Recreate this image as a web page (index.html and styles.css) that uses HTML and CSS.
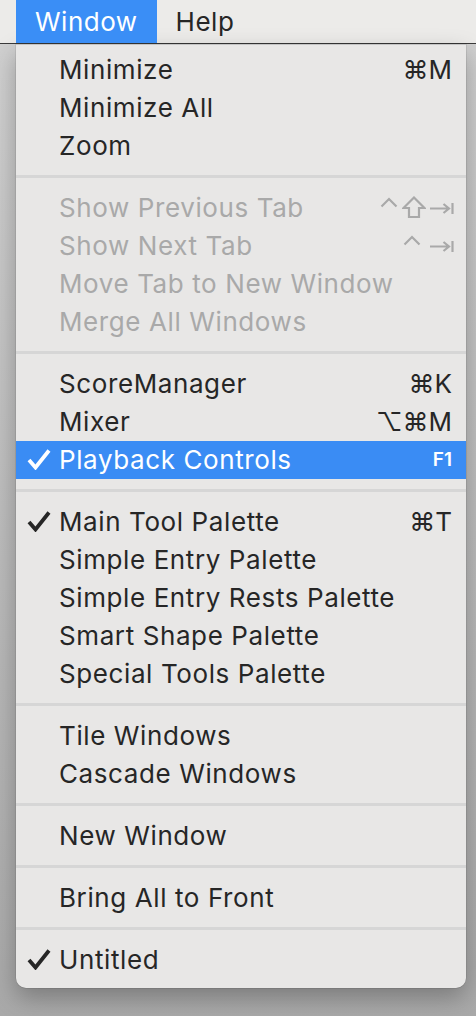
FILE: index.html
```html
<!DOCTYPE html>
<html>
<head>
<meta charset="utf-8">
<link rel="stylesheet" href="styles.css">
</head>
<body>
<div class="menubar">
  <span class="mb-item active">Window</span>
  <span class="mb-item">Help</span>
</div>
<div class="stage">
  <div class="menu">
    <div class="item"><span class="chk"></span><span class="lbl">Minimize</span><span class="key">⌘M</span></div>
    <div class="item"><span class="chk"></span><span class="lbl">Minimize All</span><span class="key"></span></div>
    <div class="item"><span class="chk"></span><span class="lbl">Zoom</span><span class="key"></span></div>
    <div class="sep"></div>
    <div class="item disabled"><span class="chk"></span><span class="lbl">Show Previous Tab</span><span class="key sym"><svg class="ic" width="18" height="24" viewBox="0 0 18 24"><path d="M1.5 10.5 L9 3 L16.5 10.5"/></svg><svg class="ic shift" width="24" height="24" viewBox="0 0 24 24"><path d="M12 1.5 L22.5 12 L17 12 L17 21 L7 21 L7 12 L1.5 12 Z"/></svg><svg class="ic" width="24" height="24" viewBox="0 0 24 24"><path d="M0 12.5 H19 M13.5 8 L19 12.5 L13.5 17 M22.5 7 V18"/></svg></span></div>
    <div class="item disabled"><span class="chk"></span><span class="lbl">Show Next Tab</span><span class="key sym next"><svg class="ic" width="18" height="24" viewBox="0 0 18 24"><path d="M1.5 10.5 L9 3 L16.5 10.5"/></svg><svg class="ic" width="24" height="24" viewBox="0 0 24 24"><path d="M0 12.5 H19 M13.5 8 L19 12.5 L13.5 17 M22.5 7 V18"/></svg></span></div>
    <div class="item disabled"><span class="chk"></span><span class="lbl">Move Tab to New Window</span><span class="key"></span></div>
    <div class="item disabled"><span class="chk"></span><span class="lbl">Merge All Windows</span><span class="key"></span></div>
    <div class="sep"></div>
    <div class="item"><span class="chk"></span><span class="lbl">ScoreManager</span><span class="key">⌘K</span></div>
    <div class="item"><span class="chk"></span><span class="lbl">Mixer</span><span class="key">⌥⌘M</span></div>
    <div class="item selected"><span class="chk"><svg class="tick" viewBox="0 0 24 22" width="24" height="22"><path d="M2 12 L8.5 19.5 L22 2.5"/></svg></span><span class="lbl">Playback Controls</span><span class="key small">F1</span></div>
    <div class="sep"></div>
    <div class="item"><span class="chk"><svg class="tick" viewBox="0 0 24 22" width="24" height="22"><path d="M2 12 L8.5 19.5 L22 2.5"/></svg></span><span class="lbl">Main Tool Palette</span><span class="key">⌘T</span></div>
    <div class="item"><span class="chk"></span><span class="lbl">Simple Entry Palette</span><span class="key"></span></div>
    <div class="item"><span class="chk"></span><span class="lbl">Simple Entry Rests Palette</span><span class="key"></span></div>
    <div class="item"><span class="chk"></span><span class="lbl">Smart Shape Palette</span><span class="key"></span></div>
    <div class="item"><span class="chk"></span><span class="lbl">Special Tools Palette</span><span class="key"></span></div>
    <div class="sep"></div>
    <div class="item"><span class="chk"></span><span class="lbl">Tile Windows</span><span class="key"></span></div>
    <div class="item"><span class="chk"></span><span class="lbl">Cascade Windows</span><span class="key"></span></div>
    <div class="sep"></div>
    <div class="item"><span class="chk"></span><span class="lbl">New Window</span><span class="key"></span></div>
    <div class="sep"></div>
    <div class="item"><span class="chk"></span><span class="lbl">Bring All to Front</span><span class="key"></span></div>
    <div class="sep"></div>
    <div class="item"><span class="chk"><svg class="tick" viewBox="0 0 24 22" width="24" height="22"><path d="M2 12 L8.5 19.5 L22 2.5"/></svg></span><span class="lbl">Untitled</span><span class="key"></span></div>
  </div>
</div>
</body>
</html>
```
FILE: styles.css
```css
html, body {
  margin: 0;
  padding: 0;
}
body {
  width: 476px;
  height: 1016px;
  overflow: hidden;
  font-family: "Inter", "Noto Sans", sans-serif;
  color: #262626;
  background: linear-gradient(to bottom, #d2d2d2 0%, #bdbdbd 50%, #a9a9a9 100%);
}
.menubar {
  height: 43px;
  background: #ecebe9;
  border-bottom: 1px solid #3a3a3a;
  display: flex;
  align-items: stretch;
  padding-left: 16px;
}
.mb-item {
  display: flex;
  align-items: center;
  padding: 0 19px;
  font-size: 26px;
  letter-spacing: 0.5px;
  color: #262626;
}
.mb-item.active {
  background: #3a8ef6;
  color: #ffffff;
}
.stage {
  padding-left: 16px;
}
.menu {
  width: 450px;
  background: #e8e7e6;
  border-top: 1px solid #c4c4c4;
  border-radius: 0 0 10px 10px;
  padding: 6px 0 9px;
  box-shadow: 0 10px 24px rgba(0, 0, 0, 0.28), 0 0 0 0.5px rgba(0, 0, 0, 0.15);
}
.item {
  height: 38px;
  display: grid;
  grid-template-columns: 43px 1fr auto;
  align-items: center;
  padding-right: 14px;
  font-size: 26px;
  letter-spacing: 0.6px;
  line-height: 38px;
  white-space: nowrap;
}
.chk {
  display: flex;
  align-items: center;
  justify-content: flex-end;
  padding-right: 8px;
  height: 38px;
}
.tick {
  display: block;
  margin-bottom: 2px;
}
.tick path {
  fill: none;
  stroke: #262626;
  stroke-width: 3.8;
  stroke-linecap: butt;
  stroke-linejoin: miter;
}
.selected .tick path {
  stroke: #ffffff;
}
.key {
  font-size: 26px;
  letter-spacing: 0;
}
.key.sym {
  display: flex;
  align-items: center;
  gap: 4px;
  margin-right: -2px;
}
.key.sym.next {
  gap: 9px;
}
.ic {
  display: block;
}
.ic path {
  fill: none;
  stroke: #a9a9a9;
  stroke-width: 2.2;
  stroke-linejoin: miter;
}
.key.small {
  font-size: 19px;
  font-weight: 600;
}
.disabled {
  color: #a9a9a9;
}
.selected {
  background: #3a8cf4;
  color: #ffffff;
}
.sep {
  height: 3px;
  background: #d6d6d6;
  margin: 10px 0 11px;
}
```
